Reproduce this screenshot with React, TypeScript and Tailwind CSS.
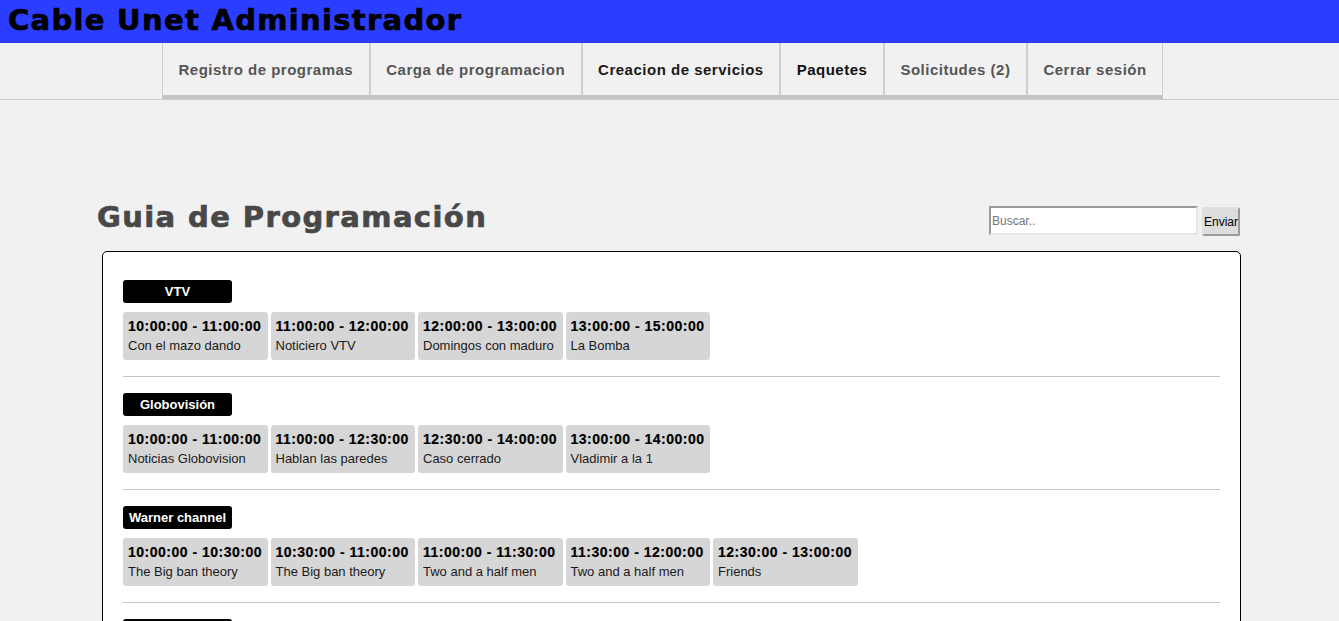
import React from 'react';

type Program = { time: string; title: string };
type Channel = { name: string; programs: Program[] };

const channels: Channel[] = [
  {
    name: 'VTV',
    programs: [
      { time: '10:00:00 - 11:00:00', title: 'Con el mazo dando' },
      { time: '11:00:00 - 12:00:00', title: 'Noticiero VTV' },
      { time: '12:00:00 - 13:00:00', title: 'Domingos con maduro' },
      { time: '13:00:00 - 15:00:00', title: 'La Bomba' },
    ],
  },
  {
    name: 'Globovisión',
    programs: [
      { time: '10:00:00 - 11:00:00', title: 'Noticias Globovision' },
      { time: '11:00:00 - 12:30:00', title: 'Hablan las paredes' },
      { time: '12:30:00 - 14:00:00', title: 'Caso cerrado' },
      { time: '13:00:00 - 14:00:00', title: 'Vladimir a la 1' },
    ],
  },
  {
    name: 'Warner channel',
    programs: [
      { time: '10:00:00 - 10:30:00', title: 'The Big ban theory' },
      { time: '10:30:00 - 11:00:00', title: 'The Big ban theory' },
      { time: '11:00:00 - 11:30:00', title: 'Two and a half men' },
      { time: '11:30:00 - 12:00:00', title: 'Two and a half men' },
      { time: '12:30:00 - 13:00:00', title: 'Friends' },
    ],
  },
  {
    name: 'Sony',
    programs: [
      { time: '10:00:00 - 11:00:00', title: 'Shark Tank' },
      { time: '11:00:00 - 12:00:00', title: 'Modern Family' },
    ],
  },
];

const navItems = [
  { label: 'Registro de programas', color: 'text-[#555]' },
  { label: 'Carga de programacion', color: 'text-[#555]' },
  { label: 'Creacion de servicios', color: 'text-[#1a1a1a]' },
  { label: 'Paquetes', color: 'text-[#111]' },
  { label: 'Solicitudes (2)', color: 'text-[#555]' },
  { label: 'Cerrar sesión', color: 'text-[#555]' },
];

const heavy = { fontFamily: '"DejaVu Sans", "Liberation Sans", sans-serif' };

export default function App() {
  return (
    <div
      className="min-h-screen bg-[#f1f1f1]"
      style={{ fontFamily: '"Liberation Sans", Arial, sans-serif' }}
    >
      {/* top bar */}
      <header className="h-[43px] bg-[#2b3dff] pl-[8px]">
        <h1
          style={heavy}
          className="text-[29px] font-bold leading-[41px] tracking-[1.3px] text-black [-webkit-text-stroke:0.7px_black]"
        >
          Cable Unet Administrador
        </h1>
      </header>

      <nav className="flex h-[57px] border-b border-[#cccccc] pl-[162px]">
        {navItems.map((item) => (
          <a
            key={item.label}
            href="#"
            className={`flex h-[56px] items-center border-x border-b-4 border-x-[#cfcfcf] border-b-[#c4c4c4] px-[15.5px] pt-[2px] text-[15px] font-bold tracking-[0.5px] ${item.color}`}
          >
            {item.label}
          </a>
        ))}
      </nav>

      <main className="ml-[97px] w-[1144px] pt-[99px]">
        <div className="flex items-start justify-between">
          <h2
            style={heavy}
            className="text-[29px] font-bold leading-[37px] tracking-[1.4px] text-[#484848] [-webkit-text-stroke:0.7px_#484848]"
          >
            Guia de Programación
          </h2>
          <form className="mr-[1px] mt-[7px] flex gap-[4px]" onSubmit={(e) => e.preventDefault()}>
            <input
              placeholder="Buscar.."
              className="h-[29px] w-[209px] border-2 border-t-[#9a9a9a] border-l-[#9a9a9a] border-r-[#e6e6e6] border-b-[#e6e6e6] bg-white px-[1px] text-[12px] placeholder:text-[#757575] focus:outline-none"
            />
            <button className="mt-[1px] h-[29px] w-[38px] rounded-[2px] border-2 border-t-[#e0e0e0] border-l-[#e0e0e0] border-r-[#9a9a9a] border-b-[#9a9a9a] bg-[#dddddd] text-[12px] text-black">
              Enviar
            </button>
          </form>
        </div>

        <div className="ml-[5px] mt-[15px] rounded-[5px] border border-black bg-white px-[20px] pt-[28px]">
          {channels.map((ch, i) => (
            <section key={ch.name}>
              <div className="flex h-[23px] w-[109px] items-center justify-center rounded-[3px] bg-black text-[13px] font-bold text-white">
                <span className="whitespace-nowrap">{ch.name}</span>
              </div>
              <div className="mt-[9px] flex gap-[3px]">
                {ch.programs.map((p, j) => (
                  <div key={j} className="h-[48px] w-[144.5px] rounded-[3px] bg-[#d6d6d6] px-[5px] pt-[4px]">
                    <div className="whitespace-nowrap text-[14px] font-bold leading-[20px] tracking-[0.5px] text-black [-webkit-text-stroke:0.2px_black]">
                      {p.time}
                    </div>
                    <div className="whitespace-nowrap text-[13px] leading-[19px] text-[#1a1a1a]">{p.title}</div>
                  </div>
                ))}
              </div>
              {i < channels.length - 1 && <hr className="my-[16px] border-t border-[#c4c4c4]" />}
              {i === channels.length - 1 && <div className="h-[20px]" />}
            </section>
          ))}
        </div>
      </main>
    </div>
  );
}
